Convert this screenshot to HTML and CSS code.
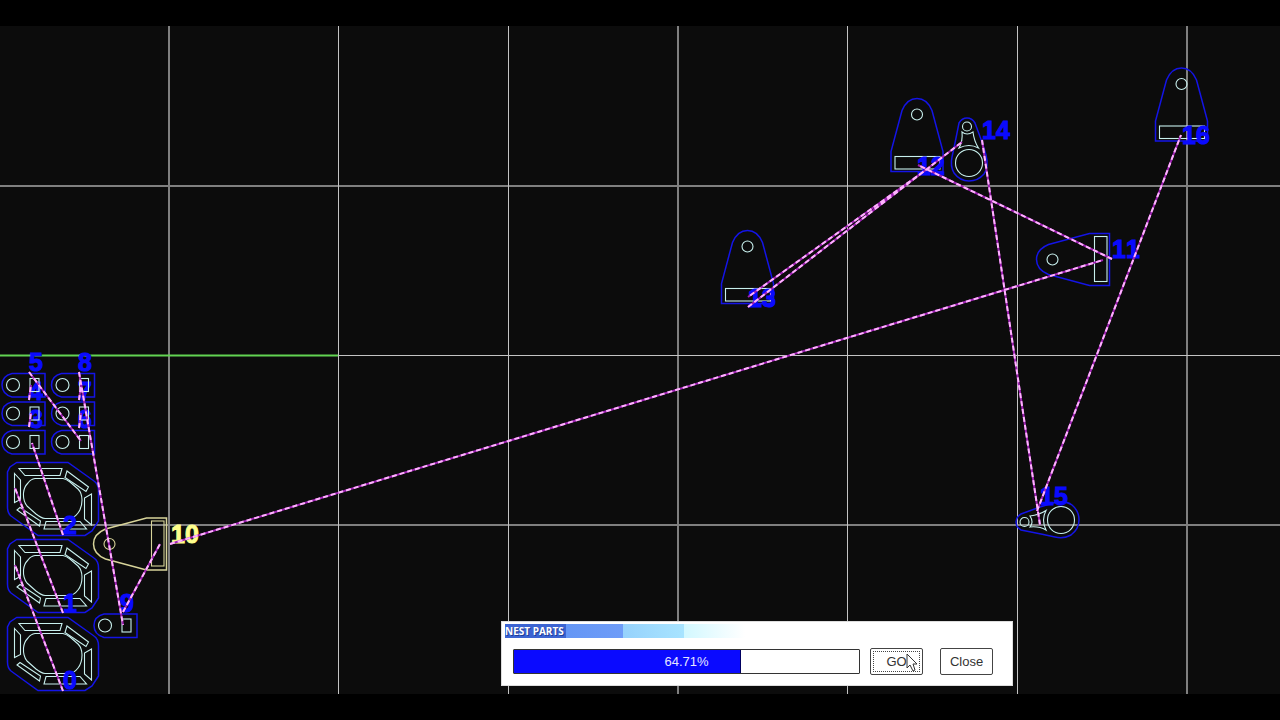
FILE: index.html
```html
<!DOCTYPE html>
<html lang="en">
<head>
  <meta charset="UTF-8">
  <meta name="viewport" content="width=device-width, initial-scale=1.0">
  <title>Nest Parts</title>
  <link rel="stylesheet" href="styles.css">
</head>
<body>
  <main class="workspace">
    <svg class="drawing" viewBox="0 26 1280 668" preserveAspectRatio="xMinYMin slice" role="img" aria-label="Nesting layout">
      <defs>
        <!-- bracket, origin at the hole -->
        <g id="bracket">
          <path class="outline" d="M-26 57V37L-15-4Q-10-16 0-16Q10-16 15-4L26 37V57Z"/>
          <circle class="cut" r="5.5"/>
          <rect class="cut" x="-22" y="42" width="45" height="12.5"/>
        </g>
        <!-- link, origin at the large hole -->
        <g id="link">
          <path class="outline" d="M-10-40Q-7-45-2-45Q3-45 6-40L13-21L17-8Q20 4 15 11Q9 18 0 18Q-9 18-15 10Q-19 3-17-6L-14-20Z"/>
          <circle class="cut" r="13.5"/>
          <circle class="cut" cx="-2" cy="-36.5" r="4.5"/>
          <path class="cut" d="M-7-31Q-2-27 4-31Q5-22 9.5-15Q0-20-10-15Q-6-22-7-31Z"/>
        </g>
        <!-- slot plate, origin at the hole -->
        <g id="slot">
          <path class="outline" d="M32-11.5H-1Q-11-9-11 0Q-11 9-1 12H32Z"/>
          <circle class="cut" r="6.5"/>
          <rect class="cut" x="17" y="-6.500" width="9" height="13"/>
        </g>
        <!-- frame, origin at the upper left of its bounds -->
        <g id="frame">
          <path class="outline" d="M16.7 12.5H68L94 31Q98.500 34 98.500 41V71L92 81L85 85.500H38L11 66Q7.500 63 7.500 57V22L10 17Z"/>
          <path class="cut" d="M19 18.500H62L60 25.500H25ZM67 21L88.500 37L86 41.500L65 27.500ZM91.500 44V75L84.500 69V48ZM46 71.500H80L86.500 79H44ZM20 57.500L40.500 71L39.500 76L17 60ZM14.500 23.500L20.500 30V49.500L14.500 52.500Z"/>
          <path class="cut" d="M35 28.500H63Q66 29 70 32L78 39Q82 43 82 50Q82 58 78 63Q74 68.500 68 68.500H45Q41 68 36 64L27 56Q23 51 23.500 43Q24 37 28 33Q31 29 35 28.500Z"/>
        </g>
      </defs>

      <g class="grid">
        <path class="soft" d="M169 26V694M678 26V694M1187 26V694M0 186H1280M0 525H1280"/>
        <path d="M338.500 26V694M508.500 26V694M847.500 26V694M1017.500 26V694M338 355.500H1280"/>
        <path class="sheet" d="M0 355.500H338"/>
      </g>

      <!-- every part is followed by its number, later parts lie on top -->
      <g class="parts">
        <use href="#frame" y="605"/>
        <text x="63" y="689">0</text>
        <use href="#frame" y="527"/>
        <text x="63" y="612">1</text>
        <use href="#frame" y="450"/>
        <text x="63" y="534">2</text>
        <use href="#slot" x="13" y="442"/>
        <text x="29" y="428">3</text>
        <use href="#slot" x="13" y="413.500"/>
        <text x="29" y="400">4</text>
        <use href="#slot" x="13" y="385"/>
        <text x="29" y="371">5</text>
        <use href="#slot" x="62.500" y="442"/>
        <text x="78" y="428">6</text>
        <use href="#slot" x="62.500" y="413.500"/>
        <text x="78" y="400">7</text>
        <use href="#slot" x="62.500" y="385"/>
        <text x="78" y="371">8</text>
        <use href="#slot" x="105" y="625.500"/>
        <text x="120" y="612">9</text>
        <use class="active" href="#bracket" transform="translate(109.500 544) rotate(-90)"/>
        <text class="active-label" x="171" y="543">10</text>
        <use href="#bracket" transform="translate(1052.500 259.500) rotate(-90)"/>
        <text x="1112" y="258">11</text>
        <use href="#bracket" x="917" y="114.500"/>
        <text x="917" y="175">12</text>
        <use href="#bracket" x="747.500" y="246.500"/>
        <text x="748" y="307">13</text>
        <use href="#link" x="969" y="163"/>
        <text x="982" y="139">14</text>
        <use href="#link" transform="translate(1061 520) rotate(-90)"/>
        <text x="1040" y="505">15</text>
        <use href="#bracket" x="1181.500" y="84"/>
        <text x="1182" y="144">16</text>
      </g>

      <!-- cutting order -->
      <defs>
        <path id="route" d="M63 691L15 565M63 613L15 488M63 535L32 443M29 427L31 413M29 400L31 385M29 372L81 441M79 428L81 413M79 400L81 385M79 372L123 625M123 612L160 544M170 544L1103 260M1112 259L918 165M930 167L748 297M748 307L962 142M982 140L1040 525M1037 511L1181 135"/>
      </defs>
      <use class="route-base" href="#route"/>
      <use class="route-dash" href="#route"/>
    </svg>

    <section class="dialog" aria-labelledby="dialog-title">
      <h1 class="dialog-title" id="dialog-title">NEST PARTS</h1>
      <div class="dialog-body">
        <div class="progress" role="progressbar" aria-label="Nesting progress" aria-valuemin="0" aria-valuemax="100" aria-valuenow="64.71">
          <div class="progress-fill" style="width: 65.7%"></div>
          <span class="progress-text">64.71%</span>
        </div>
        <button class="btn btn-go" type="button">GO</button>
        <button class="btn" type="button">Close</button>
      </div>
      <svg class="cursor" viewBox="0 0 12 19" aria-hidden="true">
        <path d="M1 1V15L4 12L7 18L9 17L7 11H11Z"/>
      </svg>
    </section>
  </main>
</body>
</html>
```
FILE: styles.css
```css
* {
  box-sizing: border-box;
}

body {
  margin: 0;
  min-height: 100vh;
  padding: 26px 0;
  display: flex;
  background: #000;
  font-family: "Liberation Sans", Arial, sans-serif;
}

.workspace {
  position: relative;
  flex: 1;
  display: flex;
  overflow: hidden;
  background: #0c0c0c;
}

.drawing {
  flex: 1;
  width: 100%;
  min-width: 0;
  fill: none;
}

.grid path {
  stroke: #c4c4c4;
  stroke-width: 1;
}

.grid .soft {
  stroke: #808080;
  stroke-width: 2;
}

.grid .sheet {
  stroke: #62d452;
  stroke-width: 2;
}

.outline {
  stroke: var(--part, #1414e6);
  stroke-width: 1.5;
}

.cut {
  stroke: var(--part, #c8f0ee);
  stroke-width: 1.1;
}

.active {
  --part: #d8d49a;
}

.parts text {
  fill: #0a0aff;
  stroke: #0a0aff;
  stroke-width: 1;
  font-size: 25px;
  font-weight: bold;
  font-kerning: none;
}

.parts .active-label {
  fill: #ffff8c;
  stroke: #ffff8c;
}

.route-base {
  stroke: #a022b4;
  stroke-width: 2;
}

.route-dash {
  stroke: #ffb4ff;
  stroke-width: 2;
  stroke-dasharray: 5 3;
}

.dialog {
  position: absolute;
  left: 501px;
  bottom: 8px;
  width: 512px;
  padding: 2px 3px 3px;
  background: #fff;
  border: 1px solid #ddd;
}

.dialog-title {
  margin: 0;
  font-family: "Open Sans", sans-serif;
  font-size: 10px;
  line-height: 14px;
  font-weight: bold;
  color: #fff;
  text-shadow: 1px 1px 0 #1e3c96;
  background: linear-gradient(90deg, #3c64d2 61px, #6496f5 61px, #6e9cf8 118px, #96d2fc 118px, #a8e4ff 179px, #d2f8ff 179px, #fff 240px);
}

.dialog-body {
  display: flex;
  align-items: center;
  gap: 10px;
  padding: 10px 16px 7px 8px;
}

.progress {
  position: relative;
  flex: 1;
  height: 25px;
  border: 1px solid #333;
  border-radius: 1px;
}

.progress-fill {
  height: 100%;
  background: #0a0aff;
  border-right: 1px solid #000060;
}

.progress-text {
  position: absolute;
  inset: 0;
  font-size: 13px;
  line-height: 23px;
  text-align: center;
  color: #e6e6ff;
}

.btn {
  width: 53px;
  height: 27px;
  padding: 0;
  font-family: inherit;
  font-size: 13px;
  color: #333;
  background: #fff;
  border: 1px solid #444;
  border-radius: 2px;
}

.btn-go {
  margin-right: 7px;
  outline: 1px dotted #444;
  outline-offset: -4px;
}

.cursor {
  position: absolute;
  right: 94px;
  bottom: 13px;
  width: 12px;
  height: 19px;
  fill: #fff;
  stroke: #333;
}
```
